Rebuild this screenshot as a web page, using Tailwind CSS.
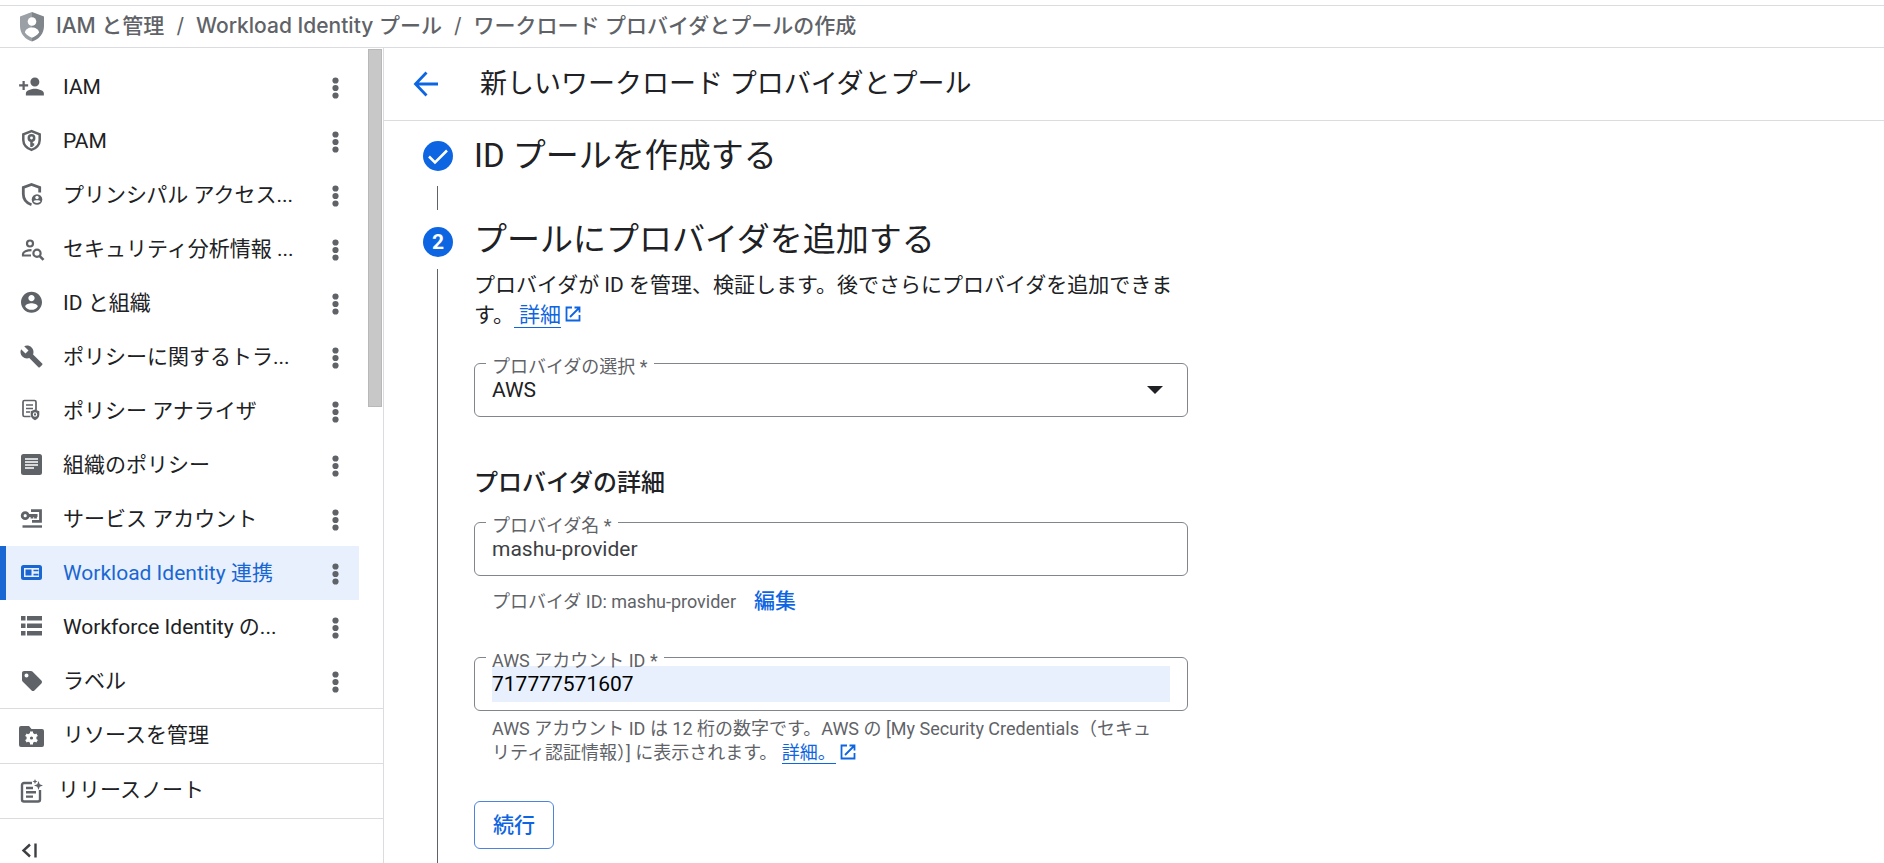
<!DOCTYPE html>
<html lang="ja">
<head>
  <meta charset="UTF-8" />
  <meta name="viewport" content="width=device-width, initial-scale=1.0"/>
  <title>新しいワークロード プロバイダとプール | IAM と管理</title>
  <script src="https://cdn.jsdelivr.net/npm/@tailwindcss/browser@4"></script>
</head>
<body class="h-screen flex flex-col overflow-hidden bg-white text-[#202124] text-[21px] leading-[30px] font-[Roboto,'Noto_Sans_CJK_JP',sans-serif]">

  <!-- Breadcrumb -->
  <header class="mt-[5px] h-[43px] shrink-0 border-y border-[#dadce0] flex items-center pl-5 text-[#5f6368] font-medium font-[Inter,'Noto_Sans_CJK_JP',sans-serif]">
    <svg class="w-6 h-[30px] shrink-0" viewBox="0 0 24 30">
      <path fill="#9aa0a6" d="M12 0L0 4.500v9.500c0 7.500 5 13.500 12 15.500z"/>
      <path fill="#80868b" d="M12 0l12 4.500v9.500c0 7.500-5 13.500-12 15.500z"/>
      <circle cx="12" cy="9.500" r="4.300" fill="#fff"/>
      <path fill="#fff" d="M5 20.500c0-3 3.500-5 7-5s7 2 7 5c-1.500 2.300-4 4.300-7 5.200-3-.9-5.500-2.900-7-5.200z"/>
    </svg>
    <nav class="flex items-center gap-3 pl-3 pb-0.5">
      <a href="#">IAM と管理</a>
      <span class="font-normal">/</span>
      <a href="#">Workload Identity プール</a>
      <span class="font-normal">/</span>
      <span>ワークロード プロバイダとプールの作成</span>
    </nav>
  </header>

  <div class="flex flex-1 min-h-0">

    <!-- Sidebar -->
    <aside class="relative w-96 shrink-0 border-r border-[#dadce0] pt-3 overflow-hidden">
      <ul id="nav-list" class="mr-6"></ul>

      <a href="#" class="flex items-center h-[55px] border-t border-[#dadce0] pl-[18px] gap-[17px]">
        <svg class="size-7" viewBox="0 0 28 28">
          <path fill="#5f6368" d="M3 4h8l2.500 3H24a2 2 0 0 1 2 2v14a2 2 0 0 1-2 2H3a2 2 0 0 1-2-2V6a2 2 0 0 1 2-2z"/>
          <circle cx="13.500" cy="16" r="3.300" fill="none" stroke="#fff" stroke-width="3.400"/>
          <path stroke="#fff" stroke-width="3" d="M13.500 9.500v2.500M13.500 20v2.500M7.900 12.700l2.200 1.300M16.900 18l2.200 1.300M7.900 19.300l2.200-1.300M16.900 14l2.200-1.300"/>
        </svg>
        <span class="pb-0.5">リソースを管理</span>
      </a>
      <a href="#" class="flex items-center h-[55px] border-t border-[#dadce0] pl-[18px] gap-3">
        <svg class="size-7" viewBox="0 0 28 28" fill="none" stroke="#5f6368" stroke-width="2.400">
          <path d="M14 6H6a2 2 0 0 0-2 2v14.500a2 2 0 0 0 2 2h14a2 2 0 0 0 2-2V13"/>
          <path d="M8 11h7M8 15.300h10M8 19.600h7"/>
          <path fill="#5f6368" stroke="none" d="M20.500 4l1.200 3.300L25 8.500l-3.300 1.200-1.200 3.300-1.200-3.300L16 8.500l3.300-1.200zM17 2l.7 1.800 1.800.7-1.800.7L17 7l-.7-1.800-1.800-.7 1.800-.7z"/>
        </svg>
        <span class="pb-0.5">リリースノート</span>
      </a>
      <div class="border-t border-[#dadce0] pl-[18px] pt-[17px]">
        <button type="button" aria-label="メニューを閉じる" class="block">
          <svg class="size-7" viewBox="0 0 28 28" fill="none" stroke="#3c4043" stroke-width="2.400">
            <path d="M12 8.500L5.500 14.500l6.500 6M17.500 7.500v14"/>
          </svg>
        </button>
      </div>

      <!-- Scroll thumb -->
      <div class="absolute top-px right-px w-3.5 h-[358px] bg-[#c8c8c8] border border-[#b8b8b8]"></div>
    </aside>

    <!-- Main -->
    <main class="flex-1 min-w-0 flex flex-col">
      <div class="h-[73px] shrink-0 border-b border-[#dadce0] flex items-center pl-[29px] gap-[39px]">
        <button type="button" aria-label="戻る">
          <svg class="size-7" viewBox="0 0 28 28" fill="none" stroke="#0e65e1" stroke-width="2.800">
            <path d="M13.500 2.500L2.500 14l11 11.500M2.500 14H25"/>
          </svg>
        </button>
        <h1 class="text-[27px] leading-9">新しいワークロード プロバイダとプール</h1>
      </div>

      <div class="flex-1 flex flex-col pl-[39px] pt-3">
        <!-- Step 1 -->
        <section class="flex gap-[21px]">
          <div class="w-[30px] shrink-0 flex flex-col pt-2">
            <svg class="size-[30px]" viewBox="0 0 30 30">
              <circle cx="15" cy="15" r="15" fill="#0e65e1"/>
              <path fill="none" stroke="#fff" stroke-width="2.500" d="M6 15.500l6 6L24 9.500"/>
            </svg>
            <div class="mt-[15px] ml-3.5 h-6 w-px bg-[#5f6368]"></div>
          </div>
          <h2 class="text-[33px] leading-[46px]">ID プールを作成する</h2>
        </section>

        <!-- Step 2 -->
        <section class="flex flex-1 gap-[21px] pt-[9px]">
          <div class="w-[30px] shrink-0 flex flex-col pt-2">
            <div class="size-[30px] rounded-full bg-[#0e65e1] text-white font-bold text-center shrink-0">2</div>
            <div class="mt-3 ml-3.5 flex-1 w-px bg-[#5f6368]"></div>
          </div>

          <form class="w-full max-w-[714px] mr-6">
            <h2 class="text-[33px] leading-[42px]">プールにプロバイダを追加する</h2>
            <p class="mt-[9px]">
              プロバイダが ID を管理、検証します。後でさらにプロバイダを追加できます。<a href="#" class="text-[#0e65e1]"><span class="border-b border-[#0e65e1]">&nbsp;詳細</span><svg class="inline size-[18px] ml-[3px] -mt-1" viewBox="0 0 18 18" fill="none" stroke="#0e65e1" stroke-width="1.800"><path d="M8 2.500H2.500v13h13V10M10.500 2.500h5v5M15.500 2.500L6 12"/></svg></a>
            </p>

            <div class="relative mt-[33px] h-[54px] border border-[#80868b] rounded-md">
              <label for="provider" class="absolute isolate left-[11px] -top-[9px] px-1.5 text-lg leading-6 text-[#5f6368] before:absolute before:inset-x-0 before:top-[7px] before:h-[3px] before:bg-white before:-z-10">プロバイダの選択 *</label>
              <select id="provider" class="w-full h-full px-[17px] appearance-none bg-transparent outline-none">
                <option>AWS</option>
              </select>
              <svg class="absolute right-6 top-[22px] w-4 h-2 pointer-events-none" viewBox="0 0 16 8"><path fill="#202124" d="M0 0h16L8 8z"/></svg>
            </div>

            <h3 class="mt-[50px] text-2xl leading-8 font-medium">プロバイダの詳細</h3>

            <div class="relative mt-[23px] h-[54px] border border-[#80868b] rounded-md">
              <label for="provider-name" class="absolute isolate left-[11px] -top-[9px] px-1.5 text-lg leading-6 text-[#5f6368] before:absolute before:inset-x-0 before:top-[7px] before:h-[3px] before:bg-white before:-z-10">プロバイダ名 *</label>
              <input id="provider-name" type="text" value="mashu-provider" class="w-full h-full px-[17px] outline-none text-[#3c4043]">
            </div>
            <p class="mt-[10px] pl-[18px] text-lg leading-[30px] text-[#5f6368]">プロバイダ ID: mashu-provider<button type="button" class="ml-[18px] text-[21px] leading-[30px] font-medium text-[#0e65e1]">編集</button></p>

            <div class="relative mt-10 h-[54px] border border-[#80868b] rounded-md px-[17px] py-2">
              <label for="account-id" class="absolute isolate left-[11px] -top-[9px] px-1.5 text-lg leading-6 text-[#5f6368] before:absolute before:inset-x-0 before:top-[7px] before:h-[3px] before:bg-white before:-z-10">AWS アカウント ID *</label>
              <input id="account-id" type="text" value="717777571607" class="block w-full h-9 bg-[#e8f0fe] text-black outline-none">
            </div>
            <p class="mt-1.5 pl-[18px] pr-8 text-lg leading-6 text-[#5f6368]">
              AWS アカウント ID は 12 桁の数字です。AWS の [My Security Credentials（セキュリティ認証情報）] に表示されます。 <a href="#" class="text-[#0e65e1]"><span class="border-b border-[#0e65e1]">詳細。</span><svg class="inline size-[18px] ml-[3px] -mt-1" viewBox="0 0 18 18" fill="none" stroke="#0e65e1" stroke-width="1.800"><path d="M8 2.500H2.500v13h13V10M10.500 2.500h5v5M15.500 2.500L6 12"/></svg></a>
            </p>

            <button type="button" class="mt-9 w-20 h-12 border border-[#4d83dc] rounded-md font-medium text-[#0e65e1]">続行</button>
          </form>
        </section>
      </div>
    </main>
  </div>

<script>
  // Icons are drawn on a 28x28 grid and take their colour from the link
  const items = [
    { label: "IAM", icon: `<path transform="scale(1.125)" d="M15 12c2.210 0 4-1.790 4-4s-1.790-4-4-4-4 1.790-4 4 1.790 4 4 4zm-9-2V7H4v3H1v2h3v3h2v-3h3v-2H6zm9 4c-2.670 0-8 1.340-8 4v2h16v-2c0-2.660-5.330-4-8-4z"/>` },
    { label: "PAM", icon: `<g fill="none" stroke="currentColor" stroke-width="2.500"><path d="M13.500 4.200L5.300 7.300v5.700c0 4.600 3.500 8.400 8.200 9.900 4.700-1.500 8.200-5.300 8.200-9.900V7.300z"/><circle cx="13.500" cy="11" r="2.700"/><path d="M13.500 13.500v6.500M13.500 17.500h2.700"/></g>` },
    { label: "プリンシパル アクセス...", icon: `<path fill="none" stroke="currentColor" stroke-width="2.800" d="M13.500 23.800C8.500 22 5.300 18 5.300 13V6.500l8.200-3.100 8.200 3.100V11.500"/><circle cx="19" cy="18.500" r="5.300"/><circle cx="19" cy="16.500" r="1.700" fill="#fff"/><path fill="#fff" d="M15.500 20.300c.8-1.400 6.200-1.400 7 0-1.500 2.200-5.500 2.200-7 0z"/>` },
    { label: "セキュリティ分析情報 ...", icon: `<g fill="none" stroke="currentColor" stroke-width="2.200"><circle cx="12" cy="8.500" r="3"/><path d="M13 20.500H5v-1.500c0-2 3.800-3.800 8.500-3.800"/><circle cx="19" cy="18.300" r="3.600"/><path stroke-width="2.600" d="M21.500 20.800l4 4"/></g>` },
    { label: "ID と組織", icon: `<path transform="translate(.9 .7) scale(1.050)" d="M12 2C6.480 2 2 6.480 2 12s4.480 10 10 10 10-4.480 10-10S17.520 2 12 2zm0 3c1.660 0 3 1.340 3 3s-1.340 3-3 3-3-1.340-3-3 1.340-3 3-3zm0 14.200c-2.500 0-4.710-1.280-6-3.220.03-1.990 4-3.080 6-3.080 1.990 0 5.970 1.090 6 3.080-1.290 1.940-3.500 3.220-6 3.220z"/>` },
    { label: "ポリシーに関するトラ...", icon: `<path transform="translate(1.500 1.500)" d="M22.700 19l-9.100-9.100c.9-2.300.4-5-1.500-6.900-2-2-5-2.400-7.400-1.300L9 6 6 9 1.600 4.700C.4 7.100.9 10.100 2.900 12.100c1.900 1.900 4.600 2.400 6.900 1.500l9.100 9.100c.4.400 1 .4 1.400 0l2.300-2.300c.5-.4.5-1.100.1-1.400z"/>` },
    { label: "ポリシー アナライザ", icon: `<path fill="none" stroke="currentColor" stroke-width="1.700" d="M12.500 19.500H6.500a1.500 1.500 0 0 1-1.500-1.500V5a1.500 1.500 0 0 1 1.500-1.500h10A1.500 1.500 0 0 1 18 5v8M8 8h7M8 11.500h7M8 15h4"/><path d="M17 12.500l4.300 1.700v3.500c0 2.500-1.800 4.500-4.300 5.500-2.500-1-4.300-3-4.300-5.500v-3.500z"/><circle cx="17" cy="17.500" r="1.700" fill="none" stroke="#fff" stroke-width="1.100"/>` },
    { label: "組織のポリシー", icon: `<rect x="3" y="3" width="21" height="21" rx="2.500"/><path stroke="#fff" stroke-width="1.500" d="M7 8h13M7 11h13M7 14h13M7 17h9"/>` },
    { label: "サービス アカウント", icon: `<g fill="none" stroke="currentColor" stroke-width="2.800"><circle cx="7.200" cy="10.700" r="3"/><path d="M10 10.500h9.500M14 10.500v3M17.500 10.500v3"/><path d="M13 5.700h9.500v10.600h-8.500"/><path stroke-width="2.400" d="M4.500 21.500H24"/></g>` },
    { label: "Workload Identity 連携", active: true, icon: `<rect x="4.500" y="7.500" width="18" height="12" rx="1" fill="none" stroke="currentColor" stroke-width="3"/><path d="M7.500 10.500h6v6h-6zM15.500 10.700h5v1.600h-5zM15.500 14.800h5v1.600h-5z"/>` },
    { label: "Workforce Identity の...", icon: `<path d="M3 3h4.500v4.500H3zM9 3h15v4.500H9zM3 10.500h4.500V15H3zM9 10.500h15V15H9zM3 18h4.500v4.500H3zM9 18h15v4.500H9z"/>` },
    { label: "ラベル", icon: `<path transform="translate(2 2)" d="M21.410 11.580l-9-9C12.050 2.220 11.550 2 11 2H4c-1.100 0-2 .9-2 2v7c0 .55.220 1.050.590 1.420l9 9c.36.36.860.580 1.410.580.550 0 1.050-.220 1.410-.590l7-7c.370-.360.590-.860.590-1.410 0-.550-.230-1.060-.590-1.420zM6.500 8.500a2 2 0 1 1 0-4 2 2 0 0 1 0 4z"/>` }
  ];

  document.getElementById("nav-list").innerHTML = items.map(item => `
    <li class="flex items-center h-[54px] ${item.active ? "bg-[#e8f0fe] text-[#1967d2] border-l-[6px] border-[#1967d2] pl-3" : "pl-[18px]"}">
      <a href="#" class="flex flex-1 items-center gap-[17px]">
        <svg class="size-7 shrink-0 ${item.active ? "text-[#1967d2]" : "text-[#5f6368]"}" viewBox="0 0 28 28" fill="currentColor">${item.icon}</svg>
        <span class="whitespace-nowrap">${item.label}</span>
      </a>
      <button type="button" aria-label="その他" class="mr-5 mt-0.5">
        <svg class="w-[7px] h-[22px]" viewBox="0 0 7 22" fill="#5f6368"><circle cx="3.500" cy="3.500" r="3.100"/><circle cx="3.500" cy="11" r="3.100"/><circle cx="3.500" cy="18.500" r="3.100"/></svg>
      </button>
    </li>`).join("");
</script>

</body>
</html>
